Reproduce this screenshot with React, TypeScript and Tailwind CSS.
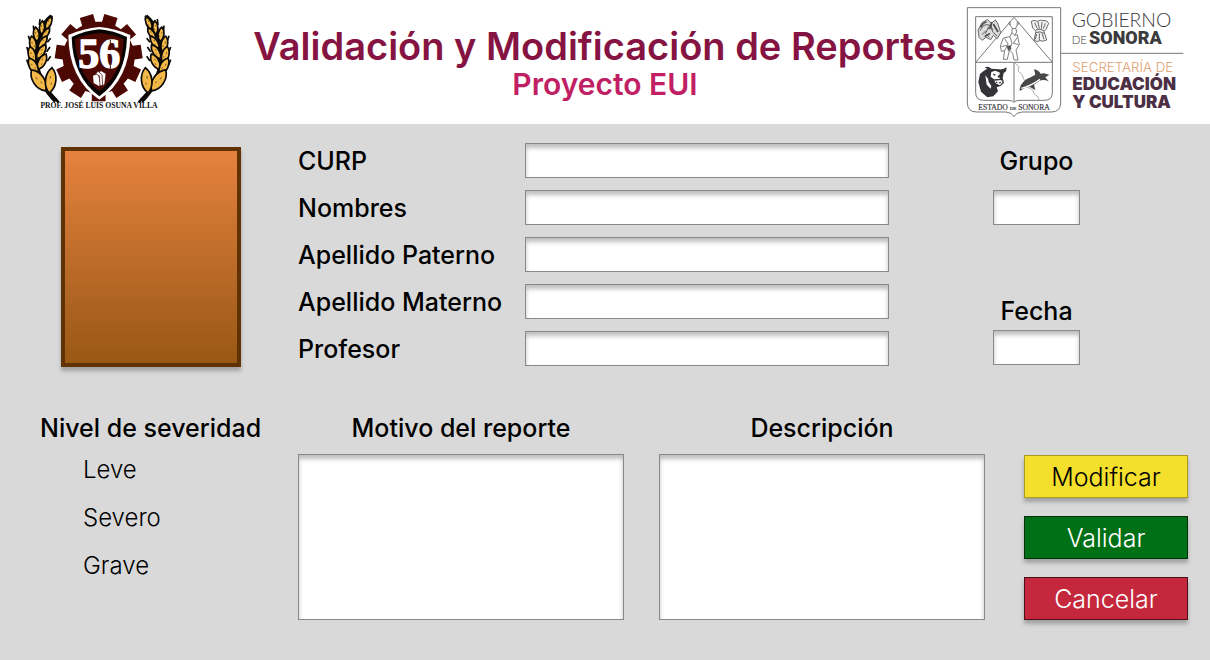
import React from "react";

type Grain = [number, number, number, number, number];

const grains: Grain[] = [
  [86, 54, 24, 8, 21],
  [66, 68, 4, 8, 21],
  [77, 86, 34, 8, 21],
  [49, 88, -6, 9, 22],
  [68, 112, 34, 9, 23],
  [39, 118, -10, 10, 25],
  [64, 140, 32, 10, 25],
  [36, 150, -14, 11, 26],
  [66, 170, 28, 11, 26],
  [40, 184, -26, 12, 28],
  [56, 226, -34, 17, 38],
  [92, 226, 6, 16, 38],
];

function gearPath(cx: number, cy: number, teeth: number, inner: number, outer: number) {
  const step = 360 / teeth;
  const points: string[] = [];
  for (let i = 0; i < teeth; i++) {
    const mid = step / 2 + i * step;
    const corners: [number, number][] = [
      [mid - 11, inner],
      [mid - 9, outer],
      [mid + 9, outer],
      [mid + 11, inner],
    ];
    for (const [deg, r] of corners) {
      const a = (deg * Math.PI) / 180;
      points.push(`${(cx + r * Math.sin(a)).toFixed(1)} ${(cy - r * Math.cos(a)).toFixed(1)}`);
    }
  }
  return `M${points.join("L")}Z`;
}

function Wheat() {
  return (
    <g>
      <path d="M95 34C62 60 48 110 48 165C52 215 80 262 108 288" fill="none" stroke="#0b0805" strokeWidth="14" />
      <path d="M88 44L97 32M58 60L60 42M42 80L40 62M30 108L25 92M26 142L20 126M82 112L92 100M80 140L90 126M82 168L92 154M26 180L20 164" stroke="#0b0805" strokeWidth="5" />
      {grains.map(([x, y, rot, rx, ry]) => (
        <g key={`${x}-${y}`} transform={`translate(${x} ${y}) rotate(${rot})`}>
          <path
            d={`M0 ${-ry}C${rx * 1.3} ${-ry / 2} ${rx * 1.3} ${ry / 2} 0 ${ry}C${-rx * 1.3} ${ry / 2} ${-rx * 1.3} ${-ry / 2} 0 ${-ry}Z`}
            fill="#f2b848"
            stroke="#0b0805"
            strokeWidth="5"
          />
          <path d={`M-2 ${-ry / 3}V${-ry / 8}M3 ${ry / 6}V${ry / 3}`} stroke="#4a3210" strokeWidth="2" />
        </g>
      ))}
      <path d="M90 264L116 292" stroke="#0b0805" strokeWidth="7" />
    </g>
  );
}

function SchoolLogo() {
  return (
    <svg viewBox="18 0 480 345" className="h-[115px] w-40" role="img" aria-label="Escuela 56">
      <path d={gearPath(236, 158, 11, 108, 132)} fill="#4c0803" />
      <path d="M238 66Q190 70 145 90Q146 222 238 284Q330 222 331 90Q286 70 238 66Z" fill="#fff" />
      <path d="M238 73Q196 77 155 96Q158 216 238 274Q318 216 321 96Q280 77 238 73Z" fill="#080404" />
      <path d="M238 84Q200 87 165 102Q169 208 238 258Q307 208 311 102Q276 87 238 84Z" fill="#4c0803" />
      <text x="238" y="190" textAnchor="middle" fontFamily="Liberation Serif, serif" fontWeight="700" fontSize="126" fill="#fff" stroke="#fff" strokeWidth="4">
        56
      </text>
      <path d="M271 104V136M271 158V196" stroke="#4c0803" strokeWidth="3" />
      <path d="M219 212L234 206L240 236L238 244L221 234Z" fill="#fff" />
      <path d="M227 207L234 199L247 206L250 240L240 242L238 212Z" fill="#fff" stroke="#4c0803" strokeWidth="2" />
      <path d="M237 202L243 197L258 206L254 238L248 242L246 209Z" fill="#fff" stroke="#4c0803" strokeWidth="2" />
      <Wheat />
      <g transform="translate(472 0) scale(-1 1)">
        <Wheat />
      </g>
      <text x="237" y="309" textAnchor="middle" fontFamily="Liberation Serif, serif" fontWeight="700" fontSize="23" fill="#111">
        PROF. JOSÉ LUIS OSUNA VILLA
      </text>
    </svg>
  );
}

function GovernmentLogo() {
  return (
    <svg viewBox="0 0 672 372" className="h-[124px] w-56" role="img" aria-label="Gobierno de Sonora">
      <g fill="none" stroke="#77777a" strokeWidth="3">
        <path d="M22 23H302V308Q302 336 274 336H186Q168 337 162 350Q156 337 138 336H50Q22 336 22 308Z" />
        <path d="M47 50H277V278Q277 301 253 301H180Q166 301 162 307Q158 301 144 301H71Q47 301 47 278Z" />
        <path d="M47 187L162 52L277 187ZM162 187V304" />
        <path d="M302 160H670" />
      </g>
      <g fill="none" stroke="#4b4b4e" strokeWidth="2.5">
        <path d="M57 112L54 90L66 68L82 59L94 70L106 60L114 72L122 98L112 116L100 106L92 119L78 112L66 121Z" fill="#dcdcdc" />
        <path d="M60 92Q70 68 90 76L76 100L88 112M92 72L98 96L112 108M82 84L100 88M66 104L78 92" />
        <path d="M62 82Q70 66 80 66M100 72L114 96M74 110L90 100M96 66L90 84" strokeWidth="5" />
        <path d="M214 64Q222 58 232 64Q242 58 252 62Q262 60 266 70L258 88L252 94L260 120Q250 126 240 122Q230 128 222 120L228 94L218 84Z" fill="#f2f2f2" />
        <path d="M224 68L232 86M234 66L238 86M246 66L244 86M256 70L250 86M228 90Q240 84 252 92M228 98Q240 92 252 100M230 102L226 118M238 100V120M246 100L252 118" />
      </g>
      <g fill="none" stroke="#68686b" strokeWidth="2.5">
        <path d="M150 64Q148 78 158 86M172 64Q174 78 166 86M150 76L145 68M172 76L178 68M156 86H168L170 96L164 106L156 98Z" />
        <path d="M156 98L150 110L130 114L121 138L124 154L134 152L130 178H142L148 150L158 160L162 180H174L168 150L178 134L172 104L164 106" />
        <path d="M134 116L144 132L134 152M172 112L160 130L176 134M124 140L140 136M150 110L156 130L148 150" />
      </g>
      <path d="M140 138L152 136L154 148L144 152Z" fill="#55555a" />
      <path
        d="M60 222Q70 212 82 206L74 203Q84 197 94 206L118 208Q132 209 139 202Q142 214 131 219L128 234L132 248L122 258L110 262L114 274L100 289L82 292L63 275L55 246Z"
        fill="#343438"
      />
      <path
        d="M94 216L106 212L120 218L116 230L128 246L120 256L106 250L102 238L92 230ZM76 226L84 236L86 246L94 258L92 266L80 254Z"
        fill="#fff"
      />
      <path d="M100 222L106 226M118 226L114 232M108 246L112 249M118 250L122 246M92 236L110 256M102 240L124 238" stroke="#343438" strokeWidth="4" />
      <path d="M165 189L177 200L174 213L187 225L191 238L202 246L205 263L218 270L224 284L235 291L237 301" fill="none" stroke="#8a8a8d" strokeWidth="2" />
      <path
        d="M179 266Q186 240 212 232L226 224L222 208Q236 210 242 221L252 220L268 224L256 232L266 244Q249 236 237 244L222 254L226 270L208 260Q193 262 179 273Z"
        fill="#47474a"
      />
      <path d="M184 265Q212 258 240 238" fill="none" stroke="#fff" strokeWidth="4" />
      <text x="162" y="329" textAnchor="middle" fontFamily="Liberation Serif, serif" fontSize="23" fill="#3b3b3e" stroke="#3b3b3e" strokeWidth="0.5">
        ESTADO <tspan fontSize="15">DE</tspan> SONORA
      </text>
      <g fontFamily="Lato, sans-serif" fill="#3a3a3c">
        <text x="335" y="80" fontSize="58" fontWeight="300">GOBIERNO</text>
        <text x="335" y="131" fontSize="34" fontWeight="300">DE</text>
        <text x="387" y="131" fontSize="54" fontWeight="900" fontFamily="Roboto, sans-serif">SONORA</text>
      </g>
      <g fontFamily="Inter, sans-serif">
        <text x="337" y="217" fontSize="40" fontWeight="300" fill="#df9f73">SECRETARÍA DE</text>
        <text x="337" y="270" fontSize="51" fontWeight="900" fill="#4c2f45">EDUCACIÓN</text>
        <text x="337" y="325" fontSize="51" fontWeight="900" fill="#4c2f45">Y CULTURA</text>
      </g>
    </svg>
  );
}

const field =
  "block border border-[#898989] bg-white px-2 text-lg shadow-[inset_0_4px_4px_rgba(0,0,0,0.25)] outline-none focus:border-black";

const label = "text-[25px] leading-8 font-medium text-black";

const fields = [
  { id: "curp", text: "CURP" },
  { id: "nombres", text: "Nombres" },
  { id: "paterno", text: "Apellido Paterno" },
  { id: "materno", text: "Apellido Materno" },
  { id: "profesor", text: "Profesor" },
];

const button = "h-[43px] border text-[25px] leading-8 shadow-[0_4px_4px_rgba(0,0,0,0.25)]";

export default function App() {
  return (
    <div className="min-h-screen bg-[#d9d9d9] font-['Inter',sans-serif] text-black">
      <header className="grid grid-cols-[1fr_auto_1fr] items-center bg-white px-[26px]">
        <SchoolLogo />
        <div className="pt-1 text-center">
          <h1 className="text-[38px] leading-10 font-semibold text-[#861442]">Validación y Modificación de Reportes</h1>
          <p className="text-[30px] leading-9 font-semibold text-[#c11f64]">Proyecto EUI</p>
        </div>
        <div className="flex justify-end">
          <GovernmentLogo />
        </div>
      </header>

      <main>
        <section className="flex items-start pt-[19px] pr-[130px] pl-[61px]">
          <div className="mt-1 mr-[57px] h-[220px] w-[180px] shrink-0 border-4 border-[#603202] bg-linear-to-b from-[#e6823f] to-[#995813] shadow-[0_4px_4px_rgba(0,0,0,0.25)]" />
          <div className="mr-[104px] flex flex-1 flex-col gap-3">
            {fields.map((f) => (
              <div key={f.id} className="flex items-center">
                <label htmlFor={f.id} className={`w-[227px] shrink-0 ${label}`}>
                  {f.text}
                </label>
                <input id={f.id} type="text" className={`h-[35px] min-w-0 flex-1 ${field}`} />
              </div>
            ))}
          </div>
          <div className="flex w-[87px] shrink-0 flex-col items-center pt-0.5">
            <label htmlFor="grupo" className={label}>
              Grupo
            </label>
            <input id="grupo" type="text" className={`mt-[13px] h-[35px] w-full ${field}`} />
            <label htmlFor="fecha" className={`mt-[70px] ${label}`}>
              Fecha
            </label>
            <input id="fecha" type="text" className={`mt-[3px] h-[35px] w-full ${field}`} />
          </div>
        </section>

        <section className="mt-[45px] grid grid-cols-[223px_1fr_1fr_168px] gap-x-[35px] pr-[22px] pb-10 pl-10">
          <div>
            <h2 className={`mb-2.5 whitespace-nowrap ${label}`}>Nivel de severidad</h2>
            <ul className="flex flex-col gap-4 pl-[43px] text-2xl leading-8 font-light">
              <li>Leve</li>
              <li>Severo</li>
              <li>Grave</li>
            </ul>
          </div>
          <div className="flex flex-col">
            <label htmlFor="motivo" className={`mb-2.5 text-center ${label}`}>
              Motivo del reporte
            </label>
            <textarea id="motivo" className={`h-[166px] w-full resize-none ${field}`} />
          </div>
          <div className="flex flex-col">
            <label htmlFor="descripcion" className={`mb-2.5 text-center ${label}`}>
              Descripción
            </label>
            <textarea id="descripcion" className={`h-[166px] w-full resize-none ${field}`} />
          </div>
          <div className="flex flex-col justify-end gap-[18px] pl-1">
            <button type="button" className={`border-[#a99b22] bg-[#f4df2c] font-light text-black ${button}`}>
              Modificar
            </button>
            <button type="button" className={`border-[#062f0c] bg-[#007017] font-light text-white ${button}`}>
              Validar
            </button>
            <button type="button" className={`border-[#4d1019] bg-[#c5283d] font-light text-white ${button}`}>
              Cancelar
            </button>
          </div>
        </section>
      </main>
    </div>
  );
}
